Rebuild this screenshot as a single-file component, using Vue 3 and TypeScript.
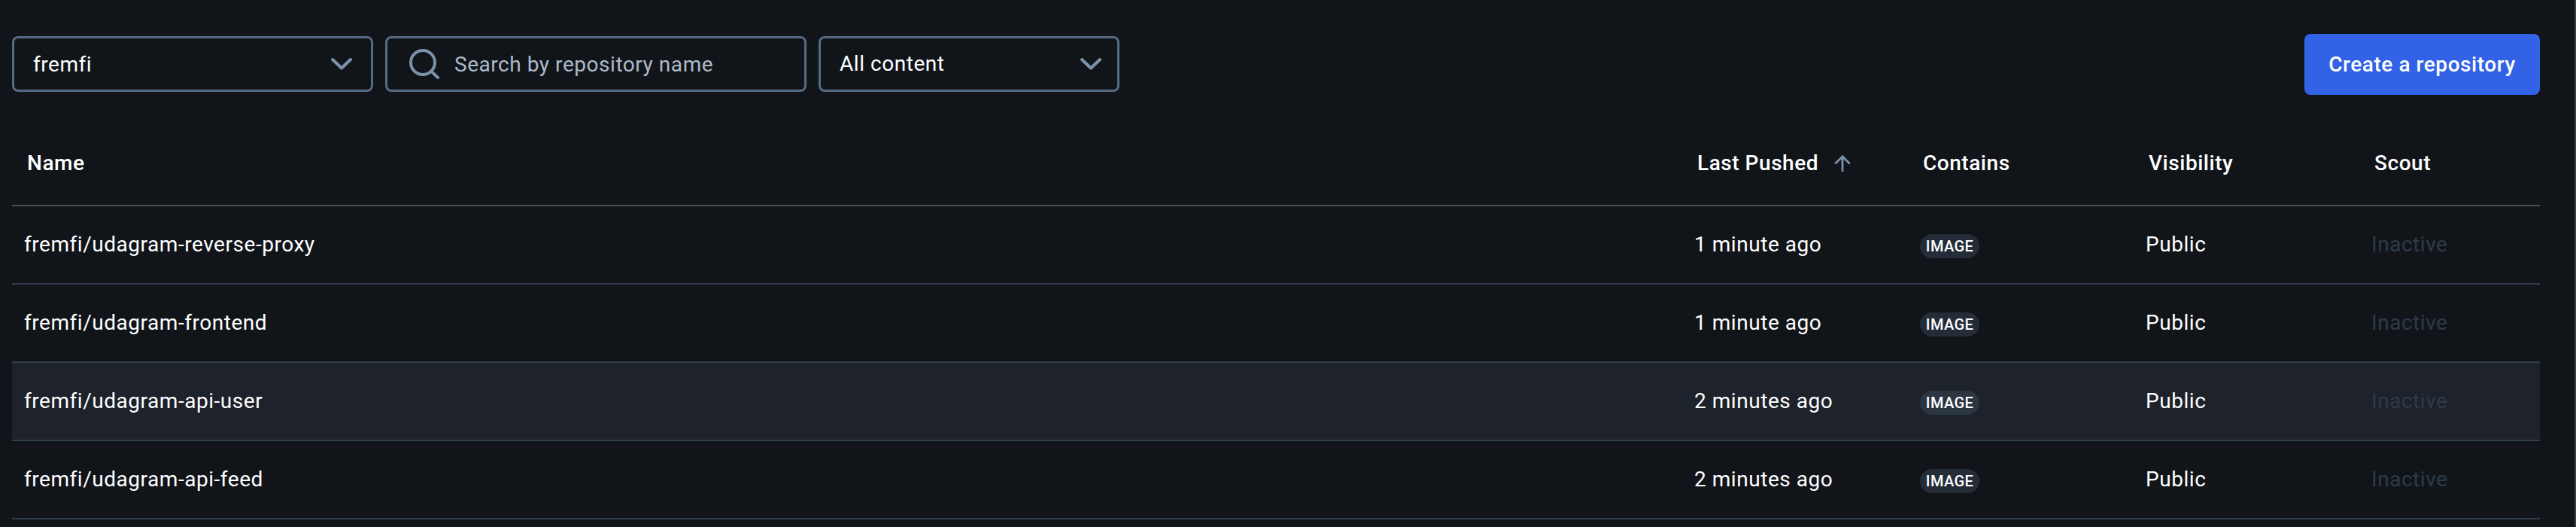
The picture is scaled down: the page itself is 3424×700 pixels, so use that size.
<script setup lang="ts">
interface Repository {
  name: string
  pushed: string
  contains: string
  visibility: string
  scout: string
  hovered?: boolean
}

const repositories: Repository[] = [
  { name: 'fremfi/udagram-reverse-proxy', pushed: '1 minute ago', contains: 'IMAGE', visibility: 'Public', scout: 'Inactive' },
  { name: 'fremfi/udagram-frontend', pushed: '1 minute ago', contains: 'IMAGE', visibility: 'Public', scout: 'Inactive' },
  { name: 'fremfi/udagram-api-user', pushed: '2 minutes ago', contains: 'IMAGE', visibility: 'Public', scout: 'Inactive', hovered: true },
  { name: 'fremfi/udagram-api-feed', pushed: '2 minutes ago', contains: 'IMAGE', visibility: 'Public', scout: 'Inactive' },
]
</script>

<template>
  <main class="page">
    <div class="toolbar">
      <div class="field namespace">
        <span>fremfi</span>
        <svg class="chevron" width="28" height="16" viewBox="0 0 28 16"><path d="M2.2 2.2 14 13.6 25.8 2.2" /></svg>
      </div>
      <div class="field search">
        <svg class="magnifier" width="40" height="40" viewBox="0 0 40 40">
          <circle cx="18" cy="18" r="16" />
          <path d="M29 29.5 38 38" />
        </svg>
        <span class="placeholder">Search by repository name</span>
      </div>
      <div class="field content">
        <span>All content</span>
        <svg class="chevron" width="28" height="16" viewBox="0 0 28 16"><path d="M2.2 2.2 14 13.6 25.8 2.2" /></svg>
      </div>
      <button class="create" type="button">Create a repository</button>
    </div>

    <div class="table">
      <div class="row head">
        <span>Name</span>
        <span class="sorted">
          Last Pushed
          <svg class="arrow" width="22" height="22" viewBox="0 0 22 22"><path d="M11 22V2M1.2 11.6 11 1.9l9.8 9.7" /></svg>
        </span>
        <span>Contains</span>
        <span>Visibility</span>
        <span>Scout</span>
      </div>
      <div v-for="repo in repositories" :key="repo.name" class="row" :class="{ hovered: repo.hovered }">
        <span>{{ repo.name }}</span>
        <span>{{ repo.pushed }}</span>
        <span class="tag-cell"><span class="tag">{{ repo.contains }}</span></span>
        <span>{{ repo.visibility }}</span>
        <span class="inactive">{{ repo.scout }}</span>
      </div>
    </div>
  </main>
</template>

<style>
body {
  margin: 0;
  background: #11151a;
}
</style>

<style scoped>
.page {
  box-sizing: border-box;
  width: 3424px;
  height: 700px;
  padding: 45px 46px 0 16px;
  overflow: hidden;
  border-right: 2px solid #3b3f45;
  background: #11151a;
  color: #fff;
  font-family: Roboto, "Liberation Sans", sans-serif;
  font-size: 28px;
  line-height: 42px;
  letter-spacing: 0.54px;
  white-space: nowrap;
}

.toolbar {
  display: flex;
  align-items: center;
  gap: 16px;
  height: 81px;
}

.field {
  box-sizing: border-box;
  display: flex;
  align-items: center;
  height: 74px;
  margin-bottom: 1px;
  border: 3px solid #556b81;
  border-radius: 8px;
}

.field span {
  padding-top: 1px;
}

.namespace,
.content {
  justify-content: space-between;
  padding: 0 25px;
}

.namespace {
  width: 480px;
}

.search {
  width: 560px;
  gap: 20px;
  padding-left: 29px;
}

.content {
  width: 400px;
  padding-right: 21px;
}

.content span {
  padding: 0 0 1px;
}

.placeholder {
  color: #adbbc9;
}

svg {
  display: block;
  fill: none;
  stroke: #7c92ab;
  stroke-linecap: round;
  stroke-linejoin: round;
}

.chevron {
  stroke-width: 4.2;
}

.magnifier {
  stroke-width: 4;
}

.create {
  width: 313px;
  height: 81px;
  margin-left: auto;
  padding: 0;
  border: 0;
  border-radius: 8px;
  background: #3263e6;
  color: #fff;
  font: inherit;
  font-weight: 500;
  letter-spacing: 0.56px;
}

.table {
  margin-top: 32px;
}

.row {
  box-sizing: border-box;
  display: grid;
  grid-template-columns: 1fr 300px 300px 300px 240px;
  align-items: center;
  height: 104px;
  border-bottom: 2px solid #303d4b;
}

.row > span {
  padding: 0 0 1px 16px;
}

.row.head {
  height: 116px;
  padding-top: 3px;
  border-bottom-color: #504f4e;
  font-weight: 500;
}

.row.head > span {
  padding: 0 0 0 20px;
}

.row > .sorted {
  display: flex;
  align-items: center;
  gap: 20.8px;
}

.arrow {
  stroke-width: 2.8;
  stroke-linecap: butt;
  stroke-linejoin: miter;
}

.hovered {
  background: #1d222b;
}

.row > .tag-cell {
  display: flex;
  padding: 4px 0 0 16px;
}

.tag {
  box-sizing: border-box;
  width: 79px;
  height: 32px;
  border-radius: 16px;
  background: #242d37;
  font-size: 20px;
  font-weight: 500;
  line-height: 32px;
  letter-spacing: 0.38px;
  text-align: center;
}

.hovered .tag {
  background: #2b3641;
}

.inactive {
  color: #2d3b49;
}
</style>
